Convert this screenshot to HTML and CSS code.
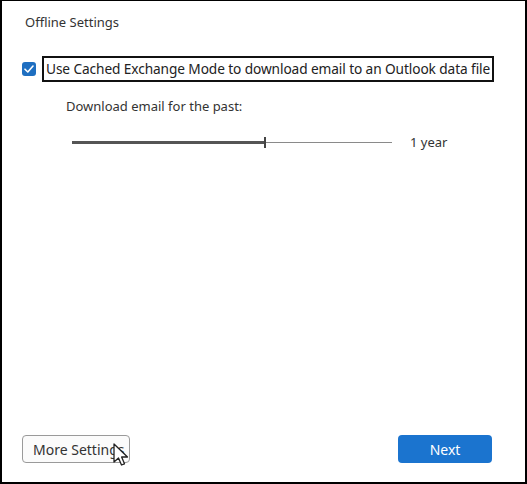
FILE: index.html
```html
<!DOCTYPE html>
<html lang="en">
<head>
  <meta charset="UTF-8" />
  <title>Offline Settings</title>
  <link rel="stylesheet" href="styles.css">
</head>
<body>
  <div class="frame">
    <div class="title">Offline Settings</div>

    <label class="cached">
      <span class="check">
        <svg width="10" height="8" viewBox="0 0 10 8"><path d="M1 4.2 L3.8 7 L9 1" fill="none" stroke="#fff" stroke-width="1.6" stroke-linecap="round" stroke-linejoin="round"/></svg>
      </span>
      <span class="focus">Use Cached Exchange Mode to download email to an Outlook data file</span>
    </label>

    <div class="past">
      <div class="past-label">Download email for the past:</div>
      <div class="slider-row">
        <div class="slider">
          <div class="fill" style="width: 60%"></div>
          <div class="thumb"></div>
          <div class="rest"></div>
        </div>
        <span class="value">1 year</span>
      </div>
    </div>

    <div class="spacer"></div>

    <div class="buttons">
      <div class="more-wrap">
        <button class="btn more">More Settings</button>
        <svg class="cursor" width="20" height="26" viewBox="0 0 20 26">
          <path d="M2 1 L2 19 L6.5 15 L9.5 22 L12.5 20.8 L9.6 14 L15.5 14 Z" fill="#fff" stroke="#222" stroke-width="1.3" stroke-linejoin="round"/>
        </svg>
      </div>
      <button class="btn next">Next</button>
    </div>
  </div>
</body>
</html>
```

FILE: styles.css
```css
html, body {
  margin: 0;
  padding: 0;
  background-color: #000;
}

.frame {
  box-sizing: border-box;
  width: 527px;
  height: 484px;
  border-style: solid;
  border-color: #000;
  border-width: 1px 2px 2px 2px;
  background-color: #fff;
  font-family: "Noto Sans", "Open Sans", sans-serif;
  color: #2b2b2b;
  display: flex;
  flex-direction: column;
  padding: 12px 0 0 0;
}

.title {
  font-size: 13px;
  margin-left: 23px;
  color: #333;
}

.cached {
  display: flex;
  align-items: center;
  margin-top: 25px;
  margin-left: 20px;
}

.check {
  width: 14px;
  height: 14px;
  border-radius: 3px;
  background-color: #1f6fc1;
  display: flex;
  align-items: center;
  justify-content: center;
  margin-right: 6px;
}

.focus {
  border: 2px solid #111;
  padding: 1px 2px 2px 2px;
  font-size: 13.7px;
  letter-spacing: -0.1px;
  color: #222;
  white-space: nowrap;
}

.past {
  margin-left: 64px;
  margin-top: 15px;
}

.past-label {
  font-size: 13px;
  color: #333;
}

.slider-row {
  display: flex;
  align-items: center;
  margin-top: 18px;
  margin-left: 6px;
}

.slider {
  width: 320px;
  display: flex;
  align-items: center;
  height: 12px;
}

.fill {
  height: 3px;
  background-color: #555;
}

.thumb {
  width: 2px;
  height: 11px;
  background-color: #444;
}

.rest {
  flex: 1;
  height: 1px;
  background-color: #8a8a8a;
}

.value {
  margin-left: 18px;
  font-size: 13px;
  color: #333;
}

.spacer {
  flex: 1;
}

.buttons {
  display: flex;
  justify-content: space-between;
  align-items: center;
  padding: 0 33px 19px 20px;
}

.btn {
  font-family: "Noto Sans", "Open Sans", sans-serif;
  font-size: 14px;
  height: 28px;
  border-radius: 4px;
  padding: 0;
}

.more-wrap {
  position: relative;
}

.more {
  width: 108px;
  background-color: #fbfbfb;
  border: 1px solid #9a9a9a;
  color: #333;
  text-align: left;
  padding-left: 10px;
  overflow: hidden;
  white-space: nowrap;
}

.cursor {
  position: absolute;
  left: 90px;
  top: 8px;
}

.next {
  width: 94px;
  background-color: #1b74cf;
  border: none;
  color: #fff;
}
```
